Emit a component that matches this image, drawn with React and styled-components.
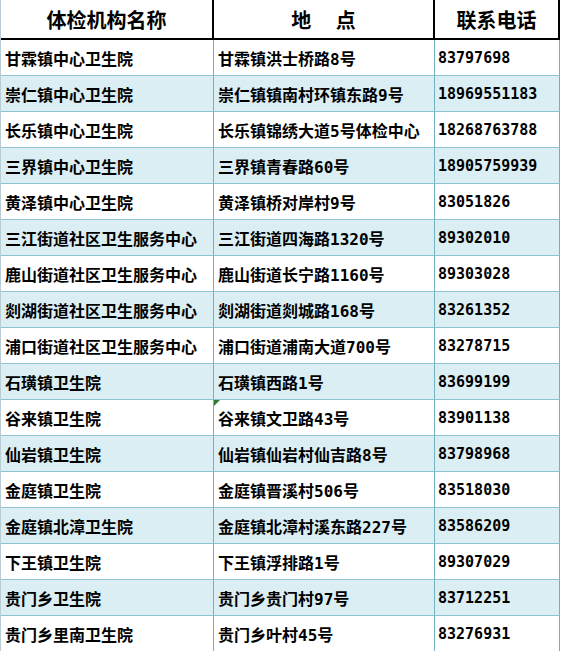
import React from "react";
import styled, { createGlobalStyle } from "styled-components";

const rows = [
  ["甘霖镇中心卫生院", "甘霖镇洪士桥路8号", "83797698"],
  ["崇仁镇中心卫生院", "崇仁镇镇南村环镇东路9号", "18969551183"],
  ["长乐镇中心卫生院", "长乐镇锦绣大道5号体检中心", "18268763788"],
  ["三界镇中心卫生院", "三界镇青春路60号", "18905759939"],
  ["黄泽镇中心卫生院", "黄泽镇桥对岸村9号", "83051826"],
  ["三江街道社区卫生服务中心", "三江街道四海路1320号", "89302010"],
  ["鹿山街道社区卫生服务中心", "鹿山街道长宁路1160号", "89303028"],
  ["剡湖街道社区卫生服务中心", "剡湖街道剡城路168号", "83261352"],
  ["浦口街道社区卫生服务中心", "浦口街道浦南大道700号", "83278715"],
  ["石璜镇卫生院", "石璜镇西路1号", "83699199"],
  ["谷来镇卫生院", "谷来镇文卫路43号", "83901138", true],
  ["仙岩镇卫生院", "仙岩镇仙岩村仙吉路8号", "83798968"],
  ["金庭镇卫生院", "金庭镇晋溪村506号", "83518030"],
  ["金庭镇北漳卫生院", "金庭镇北漳村溪东路227号", "83586209"],
  ["下王镇卫生院", "下王镇浮排路1号", "89307029"],
  ["贵门乡卫生院", "贵门乡贵门村97号", "83712251"],
  ["贵门乡里南卫生院", "贵门乡叶村45号", "83276931"],
];

const GlobalStyle = createGlobalStyle`
  body {
    margin: 0;
    background: #ffffff;
  }
`;

const Sheet = styled.div`
  display: grid;
  grid-template-columns: 213px 221px 125px;
  width: 559px;
  border-left: 1px solid #b9cbd3;
  font-family: "DejaVu Sans Mono", "Noto Sans CJK SC", monospace;
  color: #000;
`;

const HeadCell = styled.div`
  height: 38px;
  display: flex;
  align-items: center;
  justify-content: center;
  border-bottom: 2px solid #000;
  border-right: 2px solid #000;
  font-family: "Noto Sans CJK SC", sans-serif;
  font-size: 20px;
  font-weight: 700;
  white-space: pre;
`;

const Cell = styled.div`
  position: relative;
  height: 35px;
  display: flex;
  align-items: center;
  padding-left: ${(p) => (p.$phone ? "3px" : "4px")};
  background: ${(p) => (p.$shaded ? "#daeef3" : "#ffffff")};
  border-bottom: 1px solid #8cc4d2;
  border-right: 1px solid #6fb0c2;
  font-size: ${(p) => (p.$phone ? "15px" : "16px")};
  font-weight: 700;
  white-space: nowrap;
  overflow: hidden;
`;

const Marker = styled.span`
  position: absolute;
  top: 0;
  left: 0;
  width: 0;
  height: 0;
  border-top: 6px solid #2e7d32;
  border-right: 6px solid transparent;
`;

export default function App() {
  return (
    <>
      <GlobalStyle />
      <Sheet>
        <HeadCell>体检机构名称</HeadCell>
        <HeadCell>{"地　 点"}</HeadCell>
        <HeadCell>联系电话</HeadCell>
        {rows.map(([name, addr, phone, flag], i) => (
          <React.Fragment key={name}>
            <Cell $shaded={i % 2 === 1}>{name}</Cell>
            <Cell $shaded={i % 2 === 1}>
              {flag && <Marker />}
              {addr}
            </Cell>
            <Cell $shaded={i % 2 === 1} $phone>
              {phone}
            </Cell>
          </React.Fragment>
        ))}
      </Sheet>
    </>
  );
}
